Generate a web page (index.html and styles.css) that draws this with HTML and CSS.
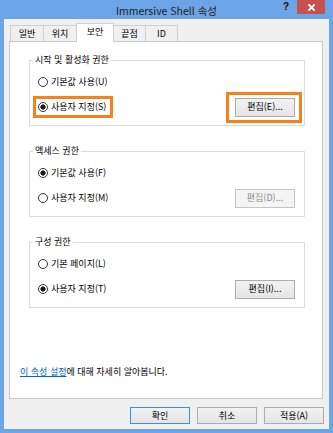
FILE: index.html
```html
<!DOCTYPE html>
<html lang="ko">
<head>
<meta charset="utf-8">
<title>Immersive Shell 속성</title>
<link rel="stylesheet" href="styles.css">
</head>
<body>
<div class="window">
  <div class="titlebar">
    <span class="spacer"></span>
    <span class="title">Immersive Shell 속성</span>
    <div class="controls">
      <span class="help">?</span>
      <span class="close"><svg width="7" height="7" viewBox="0 0 7 7"><path d="M1 1L6 6M6 1L1 6" stroke="#fff" stroke-width="1.8" stroke-linecap="square"/></svg></span>
    </div>
  </div>
  <div class="client">
    <div class="tabs">
      <span class="tab t1">일반</span>
      <span class="tab t2">위치</span>
      <span class="tab t3 active">보안</span>
      <span class="tab t4">끝점</span>
      <span class="tab t5">ID</span>
    </div>
    <div class="panel">
      <fieldset class="group">
        <legend>시작 및 활성화 권한</legend>
        <div class="row">
          <label class="opt"><span class="radio"></span>기본값 사용(U)</label>
        </div>
        <div class="row row2">
          <span class="hl hl-radio"><label class="opt"><span class="radio on"></span>사용자 지정(S)</label></span>
          <span class="hl hl-btn"><button class="btn">편집(E)...</button></span>
        </div>
      </fieldset>
      <fieldset class="group">
        <legend>액세스 권한</legend>
        <div class="row">
          <label class="opt"><span class="radio on"></span>기본값 사용(F)</label>
        </div>
        <div class="row row2">
          <label class="opt"><span class="radio"></span>사용자 지정(M)</label>
          <button class="btn" disabled>편집(D)...</button>
        </div>
      </fieldset>
      <fieldset class="group">
        <legend>구성 권한</legend>
        <div class="row">
          <label class="opt"><span class="radio"></span>기본 페이지(L)</label>
        </div>
        <div class="row row2">
          <label class="opt"><span class="radio on"></span>사용자 지정(T)</label>
          <button class="btn">편집(I)...</button>
        </div>
      </fieldset>
      <p class="more"><a href="#">이 속성 설정</a>에 대해 자세히 알아봅니다.</p>
    </div>
    <div class="actions">
      <button class="btn act default">확인</button>
      <button class="btn act">취소</button>
      <button class="btn act">적용(A)</button>
    </div>
  </div>
</div>
</body>
</html>
```
FILE: styles.css
```css
html, body {
  margin: 0;
  padding: 0;
}
body {
  width: 333px;
  height: 433px;
  overflow: hidden;
  font-family: "Noto Sans CJK KR", "Noto Sans", sans-serif;
  font-size: 9px;
  color: #000;
}
.window {
  width: 333px;
  height: 433px;
  box-sizing: border-box;
  background: #6ba5e7;
  padding: 0 4px 4px;
  display: flex;
  flex-direction: column;
}
.titlebar {
  height: 19px;
  flex: none;
  display: grid;
  grid-template-columns: 1fr auto 1fr;
  align-items: start;
}
.title {
  font-size: 10.5px;
  line-height: 12px;
  margin-top: 5px;
  color: #222;
  white-space: nowrap;
}
.controls {
  justify-self: end;
  display: flex;
  align-items: flex-start;
  margin-right: 4px;
}
.help {
  font-family: "Liberation Sans", sans-serif;
  font-weight: bold;
  font-size: 10px;
  line-height: 12px;
  margin-top: 1px;
  margin-right: 8px;
  color: #111;
}
.close {
  width: 28px;
  height: 14px;
  background: #c75050;
  display: flex;
  align-items: center;
  justify-content: center;
}
.client {
  flex: 1;
  background: #f0f0f0;
  padding: 4px 6px 0 5px;
  display: flex;
  flex-direction: column;
}
.tabs {
  height: 18px;
  display: flex;
  align-items: flex-end;
  padding-left: 1px;
  position: relative;
  z-index: 1;
}
.tab {
  box-sizing: border-box;
  height: 16px;
  border: 1px solid #d0d0d0;
  border-bottom: none;
  background: #f0f0f0;
  display: flex;
  align-items: center;
  justify-content: center;
  line-height: 12px;
  margin-left: -1px;
}
.t1 { width: 34px; margin-left: 0; }
.t2 { width: 34px; }
.t3 { width: 38px; }
.t4 { width: 33px; }
.t5 { width: 33px; }
.tab.active {
  height: 19px;
  margin-bottom: -1px;
  background: #fff;
  position: relative;
  z-index: 2;
  padding-bottom: 2px;
}
.panel {
  height: 358px;
  box-sizing: border-box;
  border: 1px solid #c9c9c9;
  background: #fff;
  padding: 12px 17px 20px 10px;
  display: flex;
  flex-direction: column;
  gap: 19px;
}
.group {
  margin: 0 0 0 9px;
  padding: 7px 9px 8px 8px;
  border: 1px solid #dcdcdc;
  min-width: 0;
}
.group legend {
  padding: 0 2px;
  margin-left: -5px;
  line-height: 12px;
}
.row {
  height: 18px;
  display: flex;
  align-items: center;
  justify-content: space-between;
}
.row2 {
  height: 20px;
  margin-top: 6px;
}
.opt {
  display: inline-flex;
  align-items: center;
  gap: 3px;
  line-height: 12px;
  white-space: nowrap;
}
.radio {
  width: 10px;
  height: 10px;
  box-sizing: border-box;
  border: 1px solid #333;
  border-radius: 50%;
  background: #fff;
  flex: none;
}
.radio.on {
  background: radial-gradient(circle, #1a1a1a 0 2.3px, #fff 2.9px);
}
.hl {
  display: inline-flex;
  border: 3px solid #f7821b;
}
.hl-radio {
  padding: 2px 4px 2px 2px;
  margin: -5px -7px -5px -5px;
}
.hl-btn {
  padding: 3px 4px 3px 6px;
  margin: -6px -7px -6px -9px;
}
.btn {
  width: 60px;
  height: 19px;
  box-sizing: border-box;
  border: 1px solid #acacac;
  background: linear-gradient(#f2f2f2, #e5e5e5);
  font-family: inherit;
  font-size: 9px;
  line-height: 12px;
  color: #000;
  padding: 0;
  margin: 0;
}
.btn[disabled] {
  border-color: #c4c4c4;
  background: #f4f4f4;
  color: #8a8a8a;
}
.more {
  margin: auto 0 0;
  line-height: 12px;
}
.more a {
  color: #0066cc;
  text-decoration: underline;
}
.actions {
  display: flex;
  justify-content: flex-end;
  gap: 7px;
  margin: 8px -1px 0 0;
}
.btn.act {
  height: 17px;
}
.btn.default {
  border-color: #3c8fe0;
}
```
